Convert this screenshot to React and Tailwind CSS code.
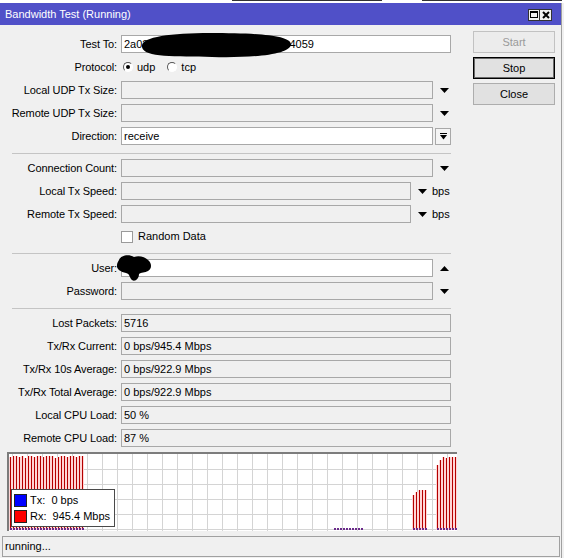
import React from 'react';

// rx samples drawn in the traffic graph: [x, top]
const leftBars = [3, 2, 2, 3, 2, 4, 2, 2, 3, 2, 2, 3, 2, 2, 2, 4, 3, 2, 2, 3, 2, 2, 3, 2, 2].map((t, i) => [1 + i * 3, t]);
const midBars = [[404, 41], [407, 38], [410, 36], [413, 36], [416, 36]];
const rightBars = [[428, 11], [431, 6], [434, 3], [437, 4], [440, 3], [443, 3], [446, 3]];
const zeroTicks = Array.from({ length: 10 }, (_, i) => 325 + i * 3);

function Down() {
  return (
    <svg width="9" height="5" viewBox="0 0 9 5">
      <polygon points="0,0 9,0 4.5,5" fill="#000" />
    </svg>
  );
}

function Up() {
  return (
    <svg width="9" height="5" viewBox="0 0 9 5">
      <polygon points="0,5 9,5 4.5,0" fill="#000" />
    </svg>
  );
}

function Row({ label, children, tall }) {
  return (
    <div className={`flex items-center mb-[5px] ${tall ? 'h-[17px]' : 'h-[18px]'}`}>
      <div className="w-[117px] shrink-0 text-right leading-none whitespace-nowrap tracking-[-0.1px]">{label}</div>
      <div className="ml-[4px] flex items-center">{children}</div>
    </div>
  );
}

function Field({ width, white, children }) {
  return (
    <div
      className={`relative h-[18px] border border-[#a8a8a8] flex items-center pl-[2px] leading-none whitespace-nowrap ${width} ${
        white ? 'bg-white' : 'bg-[#f0f0f0]'
      }`}
    >
      {children}
    </div>
  );
}

function Separator() {
  return (
    <div className="h-[9px] pt-[3px]">
      <div className="ml-[12px] w-[439px] border-t border-[#c4c4c4]" />
    </div>
  );
}

function Radio({ checked, label }) {
  return (
    <div className="flex items-center mr-[12px]">
      <div className="w-[10px] h-[10px] rounded-full bg-white border border-t-[#555] border-l-[#555] border-r-white border-b-white flex items-center justify-center">
        {checked && <div className="w-[4px] h-[4px] rounded-full bg-black" />}
      </div>
      <span className="ml-[4px]">{label}</span>
    </div>
  );
}

function Button({ children, disabled, primary }) {
  return (
    <div
      className={`w-[82px] h-[22px] flex items-center justify-center ${
        disabled
          ? 'bg-[#ececec] border border-[#c2c2c2] text-[#9a9a9a]'
          : primary
          ? 'bg-[#e1e1e1] border border-black shadow-[inset_0_0_0_1px_#6a6a6a]'
          : 'bg-[#e1e1e1] border border-[#adadad]'
      }`}
    >
      {children}
    </div>
  );
}

function Graph() {
  return (
    <div className="relative mt-[1px] ml-[7px] w-[450px] border-t-2 border-l-2 border-[#7c7c7c]">
      <svg width="448" height="77" className="block">
        <rect width="448" height="77" fill="#fff" />
        {Array.from({ length: 30 }, (_, i) => (
          <line key={'v' + i} x1={3.5 + i * 15} y1="0" x2={3.5 + i * 15} y2="77" stroke="#d4d4d4" />
        ))}
        {Array.from({ length: 5 }, (_, i) => (
          <line key={'h' + i} x1="0" y1={15.5 + i * 15} x2="448" y2={15.5 + i * 15} stroke="#d4d4d4" />
        ))}
        {[...leftBars, ...midBars, ...rightBars].map(([x, t]) => (
          <g key={'b' + x}>
            <rect x={x - 1} y={t} width="3" height={76 - t} fill="#ffd6d6" />
            <rect x={x} y={t} width="1" height={76 - t} fill="#b40000" />
            <rect x={x} y="74" width="2" height="2" fill="#6a2a8a" />
          </g>
        ))}
        {zeroTicks.map((x) => (
          <rect key={'z' + x} x={x} y="74" width="2" height="2" fill="#6a2a8a" />
        ))}
      </svg>
      <div className="absolute left-[2px] top-[35px] w-[104px] h-[38px] bg-white border border-[#4a4a4a] flex flex-col justify-center gap-[3px] pl-[2px]">
        <div className="flex items-center h-[13px]">
          <div className="w-[13px] h-[13px] bg-[#0000ff] border border-[#222]" />
          <span className="ml-[3px] whitespace-pre">Tx:  0 bps</span>
        </div>
        <div className="flex items-center h-[13px]">
          <div className="w-[13px] h-[13px] bg-[#ff0000] border border-[#222]" />
          <span className="ml-[3px] whitespace-pre">Rx:  945.4 Mbps</span>
        </div>
      </div>
    </div>
  );
}

export default function App() {
  return (
    <div className="w-[564px] h-[558px] overflow-hidden bg-[#f0f0f0] text-[11px] text-black font-['Liberation_Sans',Arial,sans-serif]">
      {/* edge of the window behind */}
      <div className="h-[3px] bg-white flex">
        <div className="ml-[232px] w-[150px] h-[1px] bg-[#333]" />
        <div className="ml-[40px] w-[140px] h-[1px] bg-[#333]" />
      </div>

      <div className="w-[562px] border-r border-[#a0a0a0]">
        {/* title bar */}
        <div className="h-[22px] bg-[#5050c8] flex items-center pl-[5px] text-white">
          <span className="flex-1 leading-none">Bandwidth Test (Running)</span>
          <div className="flex mr-[9px] mt-[1px]">
            <div className="w-[12px] h-[12px] bg-[#f0f0f0] border border-[#333] flex items-center justify-center">
              <div className="w-[8px] h-[7px] border border-black border-t-2" />
            </div>
            <div className="w-[12px] h-[12px] bg-[#f0f0f0] border border-[#333] border-l-0 flex items-center justify-center">
              <svg width="8" height="8" viewBox="0 0 8 8">
                <path d="M1 1 L7 7 M7 1 L1 7" stroke="#000" strokeWidth="2" />
              </svg>
            </div>
          </div>
        </div>

        <div className="flex">
          {/* form */}
          <div className="w-[466px] pt-[10px]">
            <Row label="Test To:">
              <Field width="w-[330px]" white>
                2a02
                <span className="ml-[141px]">4059</span>
                <svg width="152" height="27" viewBox="0 0 152 27" className="absolute left-[18px] top-[-4px]">
                  <path d="M2 15 C0 5 30 1 70 1 C115 1 150 3 151 12 C151 23 112 26 72 25 C36 24 4 26 2 15 Z" fill="#000" />
                </svg>
              </Field>
            </Row>
            <Row label="Protocol:">
              <div className="flex items-center ml-[2px]">
                <Radio checked label="udp" />
                <Radio label="tcp" />
              </div>
            </Row>
            <Row label="Local UDP Tx Size:">
              <Field width="w-[312px]" />
              <div className="ml-[7px]"><Down /></div>
            </Row>
            <Row label="Remote UDP Tx Size:">
              <Field width="w-[312px]" />
              <div className="ml-[7px]"><Down /></div>
            </Row>
            <Row label="Direction:">
              <Field width="w-[312px]" white>receive</Field>
              <div className="ml-[2px] w-[16px] h-[17px] bg-[#f4f4f4] border border-[#a8a8a8] flex items-center justify-center">
                <svg width="7" height="7" viewBox="0 0 7 7">
                  <rect x="0" y="0" width="7" height="1" fill="#000" />
                  <polygon points="0,2 7,2 3.5,6.5" fill="#000" />
                </svg>
              </div>
            </Row>
            <Separator />
            <Row label="Connection Count:">
              <Field width="w-[312px]" />
              <div className="ml-[7px]"><Down /></div>
            </Row>
            <Row label="Local Tx Speed:">
              <Field width="w-[290px]" />
              <div className="ml-[7px]"><Down /></div>
              <span className="ml-[5px]">bps</span>
            </Row>
            <Row label="Remote Tx Speed:">
              <Field width="w-[290px]" />
              <div className="ml-[7px]"><Down /></div>
              <span className="ml-[5px]">bps</span>
            </Row>
            <Row label="" tall>
              <div className="w-[12px] h-[12px] bg-white border border-[#9a9a9a]" />
              <span className="ml-[5px]">Random Data</span>
            </Row>
            <Separator />
            <Row label="User:">
              <Field width="w-[312px]" white>
                <svg width="38" height="28" viewBox="0 0 38 28" className="absolute left-[-7px] top-[-6px]">
                  <path d="M4 6 C6 1 14 0 19 3 C24 1 30 3 33 6 C37 9 37 15 33 17 C30 19 26 18 24 20 C24 25 20 28 17 26 C14 23 15 20 11 19 C6 18 1 15 2 11 C2 9 3 8 4 6 Z" fill="#000" />
                </svg>
              </Field>
              <div className="ml-[7px]"><Up /></div>
            </Row>
            <Row label="Password:">
              <Field width="w-[312px]" />
              <div className="ml-[7px]"><Down /></div>
            </Row>
            <Separator />
            <Row label="Lost Packets:">
              <Field width="w-[330px]">5716</Field>
            </Row>
            <Row label="Tx/Rx Current:">
              <Field width="w-[330px]">0 bps/945.4 Mbps</Field>
            </Row>
            <Row label="Tx/Rx 10s Average:">
              <Field width="w-[330px]">0 bps/922.9 Mbps</Field>
            </Row>
            <Row label="Tx/Rx Total Average:">
              <Field width="w-[330px]">0 bps/922.9 Mbps</Field>
            </Row>
            <Row label="Local CPU Load:">
              <Field width="w-[330px]">50 %</Field>
            </Row>
            <Row label="Remote CPU Load:">
              <Field width="w-[330px]">87 %</Field>
            </Row>
            <Graph />
          </div>

          {/* actions */}
          <div className="ml-[7px] pt-[6px] flex flex-col gap-[4px]">
            <Button disabled>Start</Button>
            <Button primary>Stop</Button>
            <Button>Close</Button>
          </div>
        </div>

        {/* status bar */}
        <div className="mt-[5px] ml-[2px] w-[558px] h-[21px] border border-[#a0a0a0] flex items-center pl-[2px]">
          running...
        </div>
        <div className="h-[3px]" />
      </div>
    </div>
  );
}
